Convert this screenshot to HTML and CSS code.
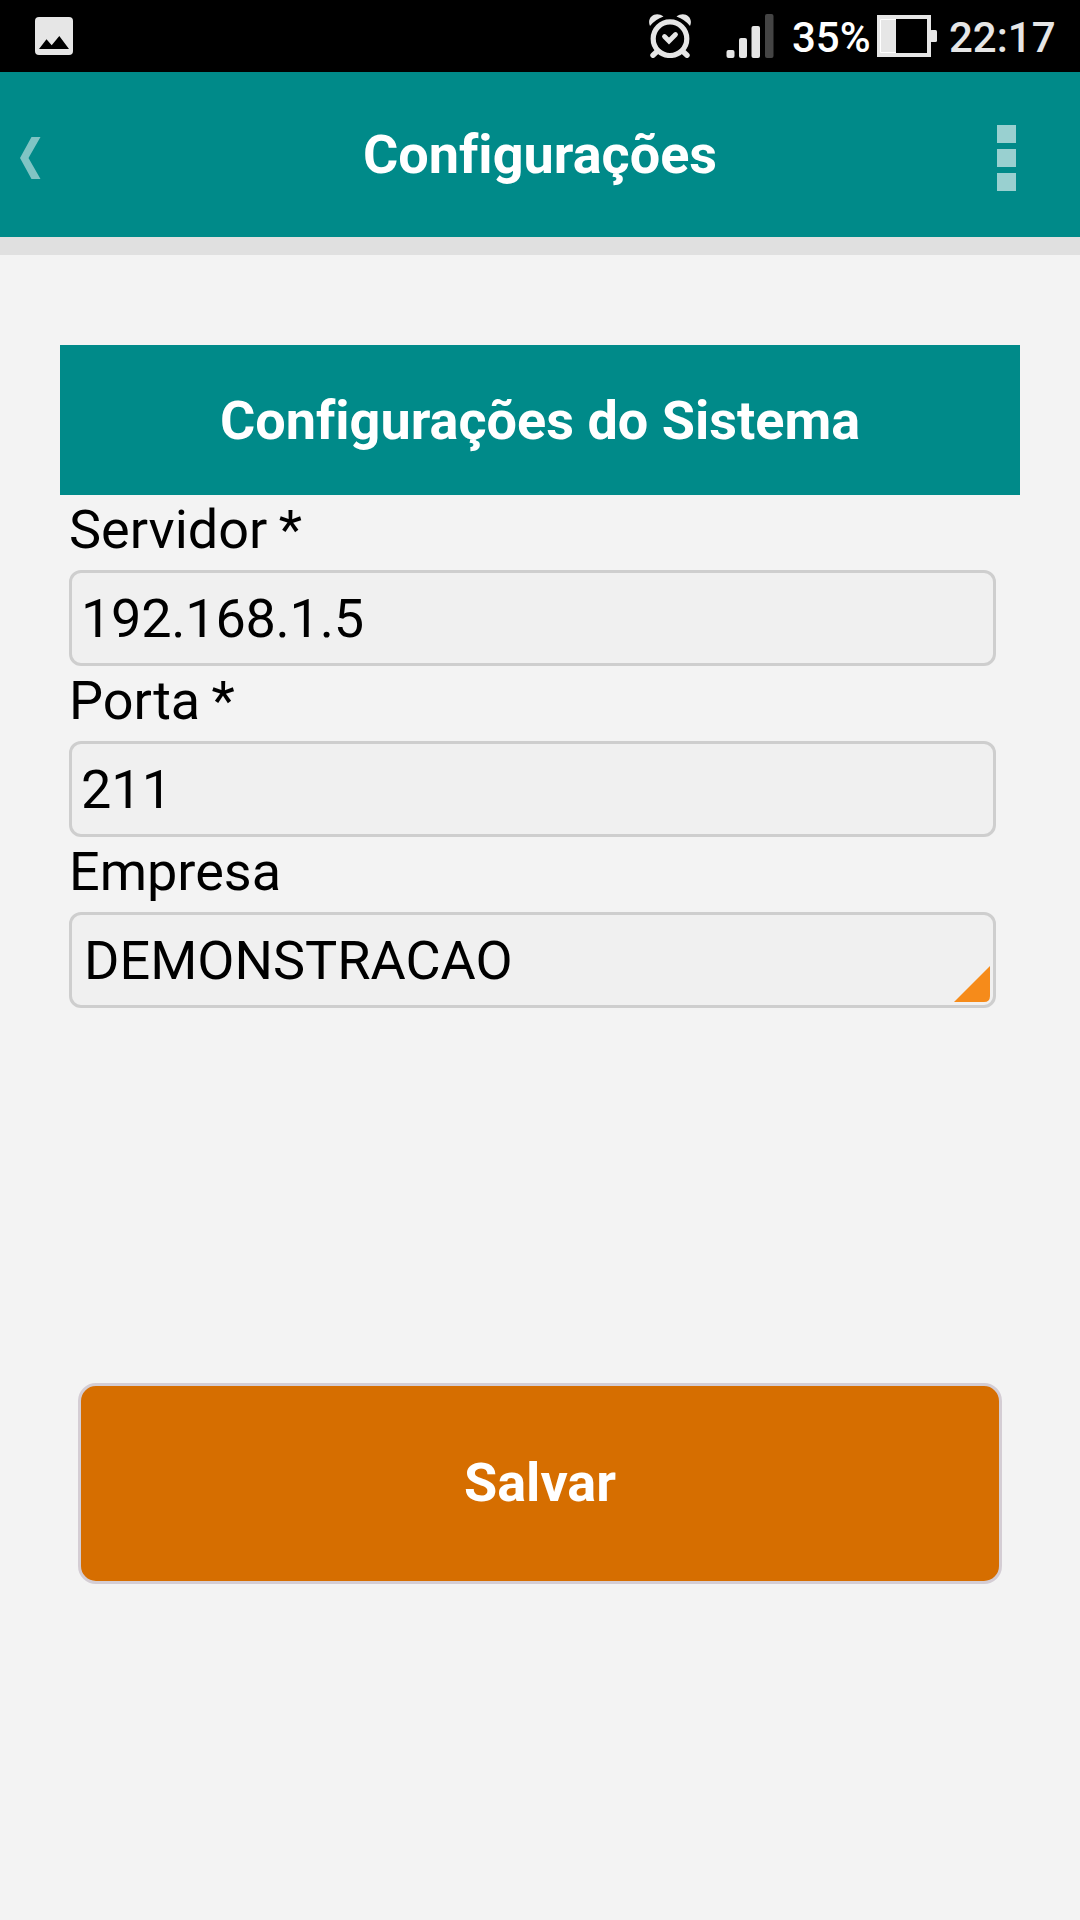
FILE: index.html
```html
<!DOCTYPE html>
<html lang="pt-BR">
<head>
  <meta charset="UTF-8" />
  <title>Configurações</title>
  <link rel="stylesheet" href="styles.css">
</head>
<body>
  <div class="statusbar">
    <svg class="icon-picture" width="38" height="38" viewBox="0 0 38 38">
      <rect width="38" height="38" rx="4" fill="#e6e6e6" />
      <path d="M4 32L11.5 22.3L16.7 28.3L24.3 19L34 32Z" fill="#000" />
    </svg>
    <svg class="icon-alarm" width="42" height="44" viewBox="0 0 42 44" fill="none" stroke="#e6e6e6">
      <circle cx="21" cy="24.7" r="16.8" stroke-width="5.2" />
      <path d="M8 37.500L4 41.2M34 37.500L38 41.2" stroke-width="5.4" stroke-linecap="round" />
      <path d="M15.5 22.5L20 27L26.5 20.5" stroke-width="4.8" stroke-linecap="round" />
      <path d="M1 12C-3 3 7-3.500 14.5 2.5Q6 5.500 1 12ZM41 12C45 3 35-3.500 27.5 2.5Q36 5.500 41 12Z" fill="#e6e6e6" stroke="none" />
    </svg>
    <svg class="icon-signal" width="48" height="44" viewBox="0 0 48 44" fill="#e6e6e6">
      <rect x="0.5" y="36" width="8" height="8" rx="2" />
      <rect x="13" y="24" width="8" height="20" rx="2" />
      <rect x="25.5" y="12" width="8.5" height="32" rx="2" />
      <rect x="39" y="0" width="8.5" height="44" rx="2" fill="#444" />
    </svg>
    <span class="percent">35%</span>
    <svg class="icon-battery" width="60" height="42" viewBox="0 0 60 42">
      <rect width="54" height="42" fill="#e6e6e6" />
      <rect x="19" y="4" width="31" height="34" fill="#000" />
      <path d="M19 4.5H3.5V37.5H19" fill="none" stroke="#fff" />
      <rect x="53" y="15" width="7" height="12" rx="1.5" fill="#e6e6e6" />
    </svg>
    <span class="clock">22:17</span>
  </div>

  <div class="header">
    <svg class="back" width="21" height="42" viewBox="0 0 21 42">
      <path d="M11.5 0H20.5L8.5 21L20.5 42H11.5L0 21Z" fill="#80c4c4" />
    </svg>
    <h1>Configurações</h1>
    <div class="menu">
      <span></span>
      <span></span>
      <span></span>
    </div>
  </div>

  <div class="content">
    <h2>Configurações do Sistema</h2>

    <div class="form">
      <label for="servidor">Servidor *</label>
      <input type="text" id="servidor" class="address" value="192.168.1.5" />
      <label for="porta">Porta *</label>
      <input type="text" id="porta" value="211" />
      <label for="empresa">Empresa</label>
      <div class="select" id="empresa">
        DEMONSTRACAO
        <svg class="corner" width="36" height="36" viewBox="0 0 36 36">
          <path d="M36 0V30Q36 36 30 36H0Z" fill="#f68b1a" />
        </svg>
      </div>
    </div>

    <button class="save">Salvar</button>
  </div>
</body>
</html>
```
FILE: styles.css
```css
body {
  margin: 0;
  min-height: 1920px;
  background-color: #f3f3f3;
  color: #000;
  font-family: Roboto, sans-serif;
  font-size: 54px;
  font-variant-ligatures: none;
}

h1, h2 {
  margin: 0;
  font-size: 54px;
  font-weight: bold;
}

.statusbar {
  display: flex;
  align-items: center;
  box-sizing: border-box;
  height: 72px;
  padding: 0 24px 0 35px;
  background-color: #000;
  font-size: 42px;
  font-weight: 500;
}

.icon-alarm {
  margin-left: auto;
}

.icon-signal {
  margin-left: 35px;
}

.percent {
  width: 79px;
  margin-left: 18px;
  color: #fff;
  white-space: nowrap;
  padding-top: 2px;
}

.icon-battery {
  margin-left: 6px;
}

.clock {
  width: 107px;
  margin-left: 12px;
  padding-top: 2px;
  color: #e6e6e6;
}

.header {
  display: flex;
  align-items: center;
  justify-content: space-between;
  box-sizing: border-box;
  height: 183px;
  padding: 0 64px 1px 20px;
  background-color: #008a89;
  border-bottom: 18px solid #e0e0e0;
  color: #fff;
}

.header .back {
  margin: 7px 42px 0 0;
}

.menu {
  display: flex;
  flex-direction: column;
  gap: 6px;
  padding-top: 7px;
}

.menu span {
  width: 19px;
  height: 18px;
  background-color: #99d0d0;
}

.content {
  padding: 90px 60px 0;
}

h2 {
  height: 150px;
  background-color: #008a89;
  color: #fff;
  line-height: 152px;
  text-align: center;
}

.form {
  display: flex;
  flex-direction: column;
  margin: 0 24px 0 9px;
}

label {
  height: 75px;
  line-height: 69px;
  word-spacing: -2px;
}

input, .select {
  box-sizing: border-box;
  height: 96px;
  padding: 0 9px;
  border: 3px solid #cecece;
  border-radius: 12px;
  background-color: #f0f0f0;
  color: #000;
  font-family: inherit;
  font-size: 54px;
  line-height: 92px;
}

.address {
  letter-spacing: -0.25px;
}

.select {
  position: relative;
  padding-left: 12px;
}

.corner {
  position: absolute;
  right: 3px;
  bottom: 3px;
}

.save {
  display: block;
  width: 924px;
  height: 201px;
  margin: 375px 0 0 18px;
  padding: 0 0 2px;
  border: 3px solid #d4cdd4;
  border-radius: 18px;
  background-color: #d66e00;
  color: #fff;
  font-family: inherit;
  font-size: 54px;
  font-weight: bold;
}
```
